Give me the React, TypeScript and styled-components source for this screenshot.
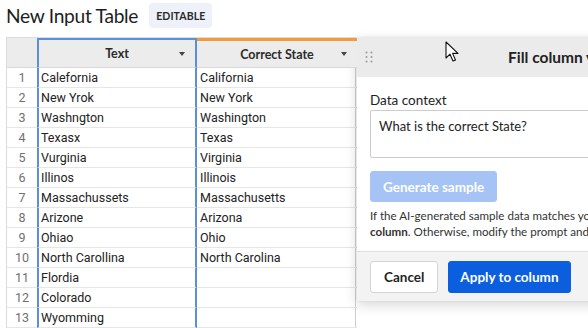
import React from 'react'
import styled, { createGlobalStyle, css } from 'styled-components'

const GlobalStyle = createGlobalStyle`
  html, body {
    margin: 0;
    padding: 0;
    background: #ffffff;
    overflow: hidden;
  }
  body {
    font-family: Lato, 'Open Sans', sans-serif;
    color: #1f1f1f;
  }
`

const Page = styled.div`
  position: relative;
  width: 588px;
  height: 328px;
  overflow: hidden;
`

const TitleBar = styled.div`
  display: flex;
  align-items: center;
  gap: 11px;
  height: 31px;
  padding: 0 0 6px 6px;
`

const Title = styled.h1`
  margin: 0;
  font-size: 19.2px;
  font-weight: 400;
  color: #1d1d1d;
  letter-spacing: -0.3px;
`

const Badge = styled.span`
  display: inline-flex;
  align-items: center;
  height: 25px;
  padding: 0 7px;
  border-radius: 4px;
  background: #eef1f9;
  font-size: 10.5px;
  font-weight: 700;
  letter-spacing: 0.1px;
  color: #2a2a2a;
`

const Workspace = styled.div`
  display: flex;
  align-items: flex-start;
  padding-left: 6px;
`

const Grid = styled.div`
  display: grid;
  grid-template-columns: 30px 160px 160px;
  grid-template-rows: 30px;
  grid-auto-rows: 20px;
  border-top: 1px solid #dcdcdc;
  border-left: 1px solid #dcdcdc;
  border-right: 1px solid #cfcfcf;
  width: 350px;
  box-sizing: border-box;
  flex-shrink: 0;
`

const HeadCell = styled.div<{ $accent?: 'blue' | 'orange' }>`
  box-sizing: border-box;
  background: #ececec;
  border-bottom: 1px solid #d9d9d9;
  display: flex;
  align-items: center;
  justify-content: center;
  position: relative;
  font-size: 12.5px;
  font-weight: 700;
  color: #2b2b2b;
  ${(p) =>
    p.$accent === 'blue' &&
    css`
      border-top: 2px solid #5d8fd8;
      border-left: 2px solid #5d8fd8;
      border-right: 2px solid #5d8fd8;
    `}
  ${(p) =>
    p.$accent === 'orange' &&
    css`
      border-top: 3px solid #f29a3e;
    `}
`

const Caret = styled.span`
  position: absolute;
  right: 10px;
  top: 50%;
  margin-top: -2px;
  width: 0;
  height: 0;
  border-left: 3.5px solid transparent;
  border-right: 3.5px solid transparent;
  border-top: 4px solid #444;
`

const NumCell = styled.div`
  display: flex;
  align-items: center;
  justify-content: center;
  border-bottom: 1px solid #e6e6e6;
  font-family: Roboto, sans-serif;
  font-size: 12.5px;
  color: #707070;
  box-sizing: border-box;
`

const DataCell = styled.div<{ $selected?: boolean }>`
  display: flex;
  align-items: center;
  padding-left: 3px;
  border-bottom: 1px solid #e6e6e6;
  font-family: Roboto, sans-serif;
  font-size: 12.5px;
  color: #222;
  box-sizing: border-box;
  white-space: nowrap;
  ${(p) =>
    p.$selected &&
    css`
      border-left: 2px solid #5d8fd8;
      border-right: 2px solid #5d8fd8;
      padding-left: 2px;
    `}
`

const Panel = styled.div`
  width: 320px;
  flex-shrink: 0;
  margin-left: 1px;
  background: #ffffff;
  box-shadow: 0 4px 12px rgba(0, 0, 0, 0.16), 0 0 2px rgba(0, 0, 0, 0.08);
`

const PanelHeader = styled.div`
  height: 40px;
  display: flex;
  align-items: center;
  background: #ebebeb;
  padding-left: 8px;
`

const Grip = styled.svg`
  width: 8px;
  height: 12px;
  flex-shrink: 0;
`

const PanelTitle = styled.div`
  margin-left: 135px;
  font-size: 15.5px;
  font-weight: 700;
  color: #222;
  white-space: nowrap;
`

const PanelBody = styled.div`
  padding: 14px 13px 11px 13px;
  border-bottom: 1px solid #dedede;
`

const Label = styled.div`
  font-size: 13.5px;
  line-height: 19px;
  color: #222;
`

const ContextBox = styled.div`
  height: 48px;
  box-sizing: border-box;
  border: 1px solid #cccccc;
  border-radius: 2px;
  padding: 7px 8px;
  font-size: 13px;
  color: #222;
  white-space: nowrap;
`

const Button = styled.button<{ $variant: 'primary' | 'muted' | 'plain' }>`
  height: 32px;
  padding: 0 13px;
  border-radius: 3px;
  font-family: Lato, sans-serif;
  font-size: 13.5px;
  font-weight: 700;
  cursor: pointer;
  white-space: nowrap;
  ${(p) =>
    p.$variant === 'primary' &&
    css`
      background: #0b5fdf;
      color: #fff;
      border: 1px solid #0b5fdf;
      padding: 0 11px;
    `}
  ${(p) =>
    p.$variant === 'muted' &&
    css`
      background: #a5c4f5;
      color: #fff;
      border: 1px solid #a5c4f5;
      height: 31px;
      margin-top: 13px;
      padding: 0 12px;
    `}
  ${(p) =>
    p.$variant === 'plain' &&
    css`
      background: #fff;
      color: #1f1f1f;
      border: 1px solid #d4d4d4;
    `}
`

const Help = styled.p`
  margin: 6px 0 0;
  font-size: 11.6px;
  line-height: 16px;
  color: #333;
  white-space: nowrap;
`

const PanelFooter = styled.div`
  display: flex;
  gap: 10px;
  padding: 9px 13px 8px;
  background: #f3f3f3;
`

const Pointer = styled.svg`
  position: absolute;
  left: 445px;
  top: 41px;
  width: 15px;
  height: 22px;
`

const rows: [string, string][] = [
  ['Calefornia', 'California'],
  ['New Yrok', 'New York'],
  ['Washngton', 'Washington'],
  ['Texasx', 'Texas'],
  ['Vurginia', 'Virginia'],
  ['Illinos', 'Illinois'],
  ['Massachussets', 'Massachusetts'],
  ['Arizone', 'Arizona'],
  ['Ohiao', 'Ohio'],
  ['North Carollina', 'North Carolina'],
  ['Flordia', ''],
  ['Colorado', ''],
  ['Wyomming', ''],
]

export default function App() {
  return (
    <Page>
      <GlobalStyle />
      <TitleBar>
        <Title>New Input Table</Title>
        <Badge>EDITABLE</Badge>
      </TitleBar>
      <Workspace>
        <Grid>
          <HeadCell />
          <HeadCell $accent="blue">
            Text
            <Caret />
          </HeadCell>
          <HeadCell $accent="orange">
            Correct State
            <Caret />
          </HeadCell>
          {rows.map(([raw, fixed], i) => (
            <React.Fragment key={i}>
              <NumCell>{i + 1}</NumCell>
              <DataCell $selected>{raw}</DataCell>
              <DataCell>{fixed}</DataCell>
            </React.Fragment>
          ))}
        </Grid>
        <Panel>
          <PanelHeader>
            <Grip viewBox="0 0 8 12">
              {[0, 1].map((c) =>
                [0, 1, 2].map((r) => <circle key={`${c}${r}`} cx={1.5 + c * 5} cy={1.5 + r * 4.5} r={1} fill="#9a9a9a" />),
              )}
            </Grip>
            <PanelTitle>Fill column values with AI</PanelTitle>
          </PanelHeader>
          <PanelBody>
            <Label>Data context</Label>
            <ContextBox>What is the correct State?</ContextBox>
            <Button $variant="muted">Generate sample</Button>
            <Help>
              If the AI-generated sample data matches your expectations, click <b>Apply to</b>
              <br />
              <b>column</b>. Otherwise, modify the prompt and try again.
            </Help>
          </PanelBody>
          <PanelFooter>
            <Button $variant="plain">Cancel</Button>
            <Button $variant="primary">Apply to column</Button>
          </PanelFooter>
        </Panel>
      </Workspace>
      <Pointer viewBox="0 0 15 22">
        <path d="M1 1 L1 17 L5 13.2 L8 20 L10.5 19 L7.6 12.4 L13 12.4 Z" fill="#fff" stroke="#111" strokeWidth="1.1" strokeLinejoin="round" />
      </Pointer>
    </Page>
  )
}
